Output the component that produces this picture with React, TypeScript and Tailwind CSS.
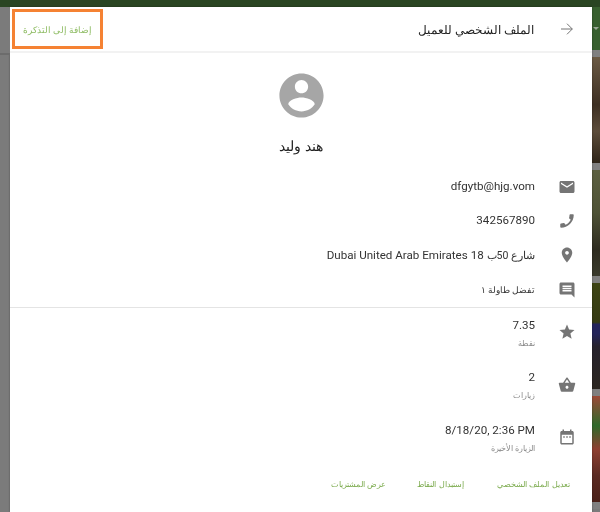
const FONT = "font-['Roboto','Noto_Sans',sans-serif]";

const icons = {
  email: "M20 4H4c-1.1 0-1.99.9-1.99 2L2 18c0 1.1.9 2 2 2h16c1.1 0 2-.9 2-2V6c0-1.1-.9-2-2-2zm0 4l-8 5-8-5V6l8 5 8-5v2z",
  phone: "M20.01 15.38c-1.23 0-2.42-.2-3.53-.56-.35-.12-.74-.03-1.01.24l-1.57 1.97c-2.83-1.35-5.48-3.9-6.89-6.83l1.95-1.66c.27-.28.35-.67.24-1.02-.37-1.11-.56-2.3-.56-3.53 0-.54-.45-.99-.99-.99H4.19C3.65 3 3 3.24 3 3.99 3 13.28 10.73 21 20.01 21c.71 0 .99-.63.99-1.18v-3.45c0-.54-.45-.99-.99-.99z",
  place: "M12 2C8.13 2 5 5.13 5 9c0 5.25 7 13 7 13s7-7.75 7-13c0-3.87-3.13-7-7-7zm0 9.5c-1.38 0-2.5-1.12-2.5-2.5s1.12-2.5 2.5-2.5 2.5 1.12 2.5 2.5-1.12 2.5-2.5 2.5z",
  message: "M20 2H4c-1.1 0-1.99.9-1.99 2L2 22l4-4h14c1.1 0 2-.9 2-2V4c0-1.1-.9-2-2-2zm-2 12H6v-2h12v2zm0-3H6V9h12v2zm0-3H6V6h12v2z",
  star: "M12 17.27L18.18 21l-1.64-7.03L22 9.24l-7.19-.61L12 2 9.19 8.63 2 9.24l5.46 4.73L5.82 21z",
  basket: "M17.21 9l-4.38-6.56c-.19-.28-.51-.42-.83-.42-.32 0-.64.14-.83.43L6.79 9H2c-.55 0-1 .45-1 1 0 .09.01.18.04.27l2.54 9.27c.23.84 1 1.46 1.92 1.46h13c.92 0 1.69-.62 1.93-1.46l2.54-9.27L23 10c0-.55-.45-1-1-1h-4.79zM9 9l3-4.4L15 9H9zm3 8c-1.1 0-2-.9-2-2s.9-2 2-2 2 .9 2 2-.9 2-2 2z",
  date: "M9 11H7v2h2v-2zm4 0h-2v2h2v-2zm4 0h-2v2h2v-2zm2-7h-1V2h-2v2H8V2H6v2H5c-1.11 0-1.99.9-1.99 2L3 20c0 1.1.89 2 2 2h14c1.1 0 2-.9 2-2V6c0-1.1-.9-2-2-2zm0 16H5V9h14v11z",
  account: "M12 2C6.48 2 2 6.48 2 12s4.48 10 10 10 10-4.48 10-10S17.52 2 12 2zm0 3c1.66 0 3 1.34 3 3s-1.34 3-3 3-3-1.34-3-3 1.34-3 3-3zm0 14.2c-2.5 0-4.71-1.28-6-3.22.03-1.99 4-3.08 6-3.08 1.99 0 5.97 1.09 6 3.08-1.29 1.94-3.5 3.22-6 3.22z",
};

function Icon({ d, flip = false }: { d: string; flip?: boolean }) {
  return (
    <svg viewBox="0 0 24 24" className={flip ? "h-[18px] w-[18px] -scale-x-100 fill-[#757575]" : "h-[18px] w-[18px] fill-[#757575]"}>
      <path d={d} />
    </svg>
  );
}

function ContactRow({ icon, children, flip }: { icon: string; children: React.ReactNode; flip?: boolean }) {
  return (
    <div className="flex h-[34.4px] items-center">
      <div className="flex w-[46px] shrink-0 justify-center pr-[4px]">
        <Icon d={icon} flip={flip} />
      </div>
      <div className="pr-[11px] text-[11.6px] text-[#333]">{children}</div>
    </div>
  );
}

function StatRow({ icon, value, label }: { icon: string; value: string; label: string }) {
  return (
    <div className="flex h-[52.5px] items-center">
      <div className="flex w-[46px] shrink-0 justify-center pr-[4px] pb-[3px]">
        <Icon d={icon} />
      </div>
      <div className="pr-[11px]">
        <div dir="ltr" className="text-right text-[11.6px] leading-[18px] text-[#333]">{value}</div>
        <div className="text-[8.4px] leading-[18px] text-[#8a8a8a]">{label}</div>
      </div>
    </div>
  );
}

const photos = [
  "bg-[linear-gradient(180deg,#6b5a44,#3d2f22_45%,#5c4c3a_70%,#2e2418)]",
  "bg-[linear-gradient(180deg,#5c6040,#4e5236_40%,#2e2c20_75%,#3a3a2c)]",
  "bg-[linear-gradient(180deg,#3d4414,#343a12_37%,#23245a_39%,#23245a_48%,#26222c_60%,#2b2620)]",
  "bg-[linear-gradient(180deg,#9c4a38,#2f6a2a_28%,#8e3f30_50%,#5a2a22_75%,#4a2018)]",
];

export default function App() {
  return (
    <div dir="rtl" className={`flex h-[512px] w-[600px] flex-col overflow-hidden bg-[#7b7b7b] ${FONT}`}>
      <div className="h-[7px] shrink-0 bg-[#2a4522]" />
      <div className="flex min-h-0 flex-1">
        {/* strip of page showing behind the dialog */}
        <div className="flex w-[8px] shrink-0 flex-col">
          <div className="flex h-[43px] items-center justify-center bg-[#38602f]">
            <svg viewBox="0 0 6 3" className="h-[3px] w-[6px] fill-[#9aa896]">
              <path d="M0 0h6L3 3z" />
            </svg>
          </div>
          {photos.map((p) => (
            <div key={p} className="flex flex-col">
              <div className="h-[7px] bg-[#808080]" />
              <div className={`h-[106px] ${p}`} />
            </div>
          ))}
          <div className="h-[7px] bg-[#808080]" />
        </div>

        <div className="flex w-[582px] shrink-0 flex-col bg-white shadow-[0_0_2px_rgba(0,0,0,0.35)]">
          <header className="flex h-[46px] shrink-0 items-center border-b-2 border-[#f2f2f2]">
            <div className="flex w-[46px] shrink-0 justify-center pr-[4px] blur-[0.3px]">
              <svg viewBox="0 0 12 12" className="h-[12px] w-[12px] fill-none stroke-[#757575] stroke-[1]">
                <path d="M0 6h11.3M6 .7 11.3 6 6 11.3" />
              </svg>
            </div>
            <h1 className="pt-[3px] pr-[12px] text-[11.6px] font-normal text-[#222] blur-[0.3px]">الملف الشخصي للعميل</h1>
            <button className="relative mr-auto ml-[2px] flex h-[40px] w-[91px] items-center justify-center pt-[3px] text-[8.6px] text-[#8dbb62]">
              <span className="blur-[0.3px]">إضافة إلى التذكرة</span>
              <span className="absolute inset-0 border-[3px] border-[#f58233]" />
            </button>
          </header>

          <div className="flex flex-col blur-[0.3px]">
            <div className="flex flex-col items-center pt-[16px]">
              <svg viewBox="0 0 24 24" className="h-[53px] w-[53px] fill-[#a6a6a6]">
                <path d={icons.account} />
              </svg>
              <div className="mt-[15px] text-[14.4px] leading-[20px] text-[#222]">هند وليد</div>
            </div>

            <div className="mt-[12.5px] h-[137.1px]">
              <ContactRow icon={icons.email}>dfgytb@hjg.vom</ContactRow>
              <ContactRow icon={icons.phone} flip>342567890</ContactRow>
              <ContactRow icon={icons.place}>
                <span className="text-[10.5px]">شارع 50ب</span> 18 Dubai United Arab Emirates
              </ContactRow>
              <ContactRow icon={icons.message} flip>
                <span className="text-[9px]">تفضل طاولة ١</span>
              </ContactRow>
            </div>

            <div className="border-t border-[#e4e4e4]">
              <StatRow icon={icons.star} value="7.35" label="نقطة" />
              <StatRow icon={icons.basket} value="2" label="زيارات" />
              <StatRow icon={icons.date} value="8/18/20, 2:36 PM" label="الزيارة الأخيرة" />
            </div>

            <div className="mt-[13px] flex gap-[29px] pr-[20px] text-[8.4px] whitespace-nowrap text-[#7cab4e]">
              <button className="w-[77px]">تعديل الملف الشخصي</button>
              <button className="w-[51px]">إستبدال النقاط</button>
              <button className="w-[55px]">عرض المشتريات</button>
            </div>
          </div>
        </div>

        {/* left strip, the page's header edge shows as a darker line */}
        <div className="flex w-[10px] shrink-0 flex-col">
          <div className="h-[46px] bg-[#7b7b7b]" />
          <div className="h-[2px] bg-[#6c6c6c]" />
        </div>
      </div>
    </div>
  );
}
